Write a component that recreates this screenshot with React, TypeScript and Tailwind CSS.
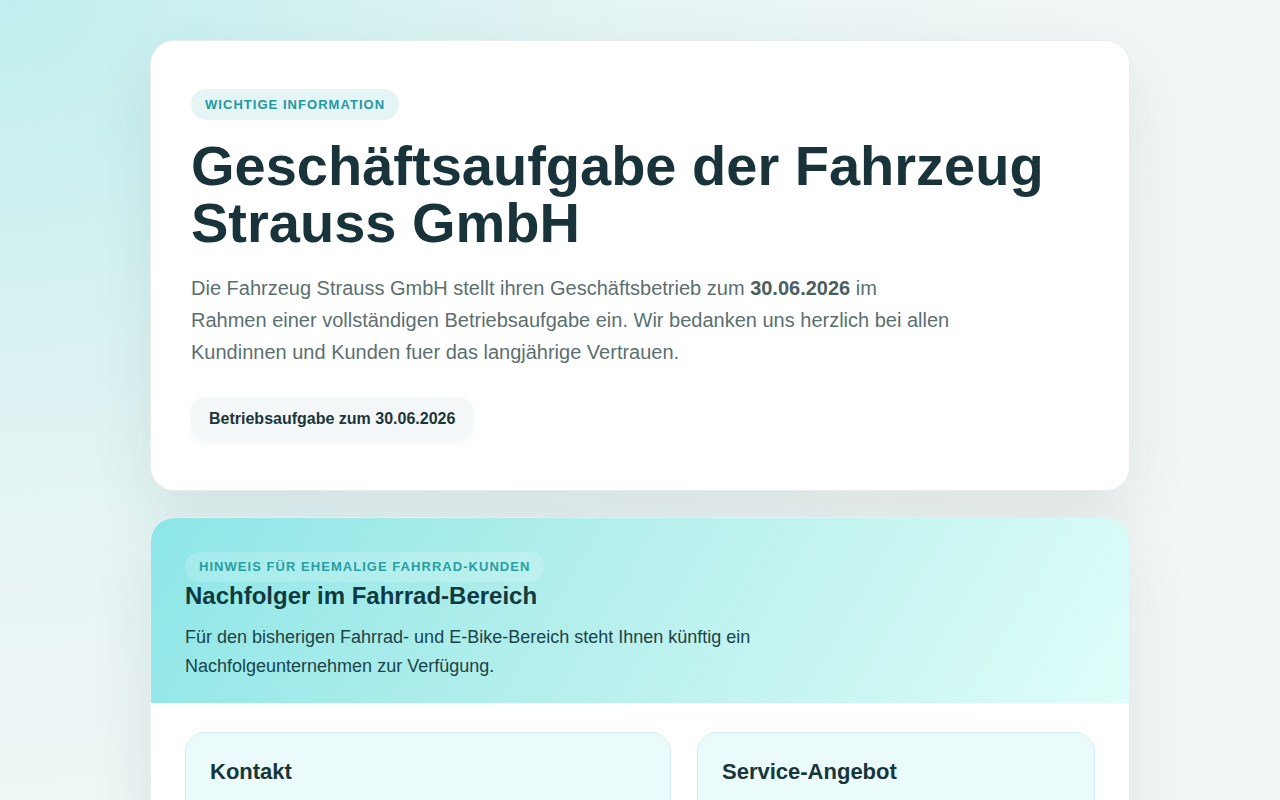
import React from "react";

const font = { fontFamily: '"Liberation Sans", Arial, sans-serif' };

export default function App() {
  return (
    <div
      className="min-h-screen w-full bg-[#f3f6f6] bg-[radial-gradient(ellipse_at_top_left,rgba(150,232,232,0.55)_0%,rgba(190,238,238,0.25)_35%,rgba(243,246,246,0)_65%)]"
      style={font}
    >
      <main className="mx-auto flex w-[980px] flex-col gap-[26px] pt-[40px] pb-10">
        {/* Announcement card */}
        <section className="rounded-[24px] border border-[#e7eeee] bg-white px-10 pt-[48px] pb-[49px] shadow-[0_24px_60px_rgba(30,70,70,0.10)]">
          <span className="inline-block rounded-full bg-[#e5f4f5] px-[14px] py-[7px] text-[13px] font-bold uppercase leading-[17px] tracking-[0.08em] text-[#2399a0]">
            Wichtige Information
          </span>
          <h1 className="mt-[17px] text-[56px] font-bold leading-[57px] text-[#18333a]">
            Geschäftsaufgabe der Fahrzeug Strauss GmbH
          </h1>
          <p className="mt-[21px] max-w-[762px] text-[20px] leading-[32px] text-[#5b6f70]">
            Die Fahrzeug Strauss GmbH stellt ihren Geschäftsbetrieb zum{" "}
            <strong className="font-bold text-[#4a5f60]">30.06.2026</strong> im Rahmen einer
            vollständigen Betriebsaufgabe ein. Wir bedanken uns herzlich bei allen Kundinnen und
            Kunden fuer das langjährige Vertrauen.
          </p>
          <div className="mt-[29px] inline-flex h-[44px] items-center rounded-[16px] bg-[#f3f7f8] px-[18px] text-[16px] font-bold text-[#1d3538] shadow-[0_2px_6px_rgba(30,70,70,0.05)]">
            Betriebsaufgabe zum 30.06.2026
          </div>
        </section>

        {/* Successor card */}
        <section className="overflow-hidden rounded-[24px] border border-[#e7eeee] bg-white shadow-[0_24px_60px_rgba(30,70,70,0.10)]">
          <div className="bg-[linear-gradient(120deg,#8de6e7_0%,#b5efec_45%,#dffdf9_100%)] px-[34px] pt-[34px] pb-[22px]">
            <span className="inline-block rounded-full bg-[rgba(255,255,255,0.18)] px-[14px] py-[7px] text-[13px] font-bold uppercase leading-[16px] tracking-[0.08em] text-[#2a9ea2]">
              Hinweis für ehemalige Fahrrad-Kunden
            </span>
            <h2 className="text-[24px] font-bold leading-[28px] text-[#0f3a40]">
              Nachfolger im Fahrrad-Bereich
            </h2>
            <p className="mt-[13px] max-w-[640px] text-[18px] leading-[29px] text-[#1b4448]">
              Für den bisherigen Fahrrad- und E-Bike-Bereich steht Ihnen künftig ein
              Nachfolgeunternehmen zur Verfügung.
            </p>
          </div>
          <div className="grid grid-cols-[486px_1fr] gap-[26px] px-[34px] pt-[29px] pb-[34px]">
            <div className="h-[220px] rounded-[20px] border border-[#d2efef] bg-[#ebfafa] px-[24px] pt-[26px]">
              <h3 className="text-[22px] font-bold leading-[26px] text-[#17363a]">Kontakt</h3>
            </div>
            <div className="h-[220px] rounded-[20px] border border-[#d2efef] bg-[#ebfafa] px-[24px] pt-[26px]">
              <h3 className="text-[22px] font-bold leading-[26px] text-[#17363a]">Service-Angebot</h3>
            </div>
          </div>
        </section>
      </main>
    </div>
  );
}
